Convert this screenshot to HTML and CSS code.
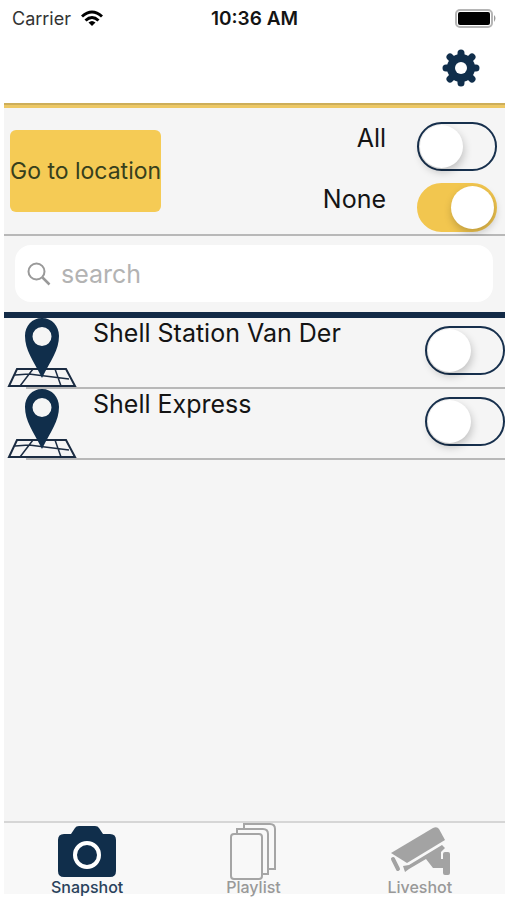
FILE: index.html
```html
<!DOCTYPE html>
<html lang="en">
<head>
<meta charset="utf-8">
<meta name="viewport" content="width=device-width, initial-scale=1">
<title>Snapshot</title>
<link rel="stylesheet" href="styles.css">
</head>
<body>
<svg class="sprite" aria-hidden="true">
  <symbol id="pin" viewBox="0 0 70 70">
    <g fill="none" stroke="#1b2c42">
      <path d="M10 51H59L68 68H2Z" stroke-width="2"/>
      <path d="M8 57L22 56L62 61M26 51L13 68M48 51L54 68" stroke-width="1.500"/>
    </g>
    <path fill="#102e4b" fill-rule="evenodd" d="M35 0C25 0 18 8 18 18C18 32 26 42 35 60C44 42 52 32 52 18C52 8 45 0 35 0ZM35 9A9.500 9.500 0 1 1 35 28A9.500 9.500 0 1 1 35 9Z"/>
  </symbol>
</svg>
<div class="app">
  <div class="status">
    <div class="carrier">Carrier
      <svg width="22" height="17" viewBox="0 0 22 17" fill="none" stroke="#000" stroke-width="3" aria-hidden="true">
        <path d="M1 6.500Q11-2.500 21 6.500M4.500 10.500Q11 4.500 17.500 10.500"/>
        <path d="M7.500 12.500Q11 9.500 14.500 12.500L11 16Z" fill="#000" stroke="none"/>
      </svg>
    </div>
    <time class="clock">10:36 AM</time>
    <svg class="battery" width="42" height="19" viewBox="0 0 42 19" aria-hidden="true">
      <rect x="1" y="1" width="36" height="17" rx="4" fill="#fff" stroke="#b5b5b5" stroke-width="2"/>
      <rect x="3" y="3" width="32" height="13" rx="2"/>
      <path d="M39 6Q42 9 39 13Z" fill="#999"/>
    </svg>
  </div>
  <header class="header">
    <button class="settings" aria-label="Settings">
      <svg width="38" height="38" viewBox="-19 -19 38 38" aria-hidden="true">
        <g stroke="#102e4b" stroke-width="7" stroke-linecap="round">
          <path d="M0-15V15M-15 0H15"/>
          <path d="M-11-11L11 11M11-11L-11 11"/>
        </g>
        <circle r="14" fill="#102e4b"/>
        <circle r="6" fill="#fff"/>
      </svg>
    </button>
  </header>
  <section class="filters">
    <button class="goto">Go to location</button>
    <div class="choices">
      <label class="choice"><span>All</span><input class="switch" type="checkbox"></label>
      <label class="choice"><span>None</span><input class="switch" type="checkbox" checked></label>
    </div>
  </section>
  <div class="search">
    <label class="field">
      <svg width="24" height="24" viewBox="0 0 24 24" fill="none" stroke="#999" stroke-width="2" aria-hidden="true">
        <circle cx="9.500" cy="9.500" r="8"/><path d="M15.500 15.500L22.500 22.500" stroke-width="2.500"/>
      </svg>
      <input class="query" type="search" placeholder="search" aria-label="search">
    </label>
  </div>
  <main class="list">
    <label class="row">
      <svg class="pin" aria-hidden="true"><use href="#pin"/></svg>
      <span class="name">Shell Station Van Der</span>
      <input class="switch" type="checkbox">
    </label>
    <label class="row">
      <svg class="pin" aria-hidden="true"><use href="#pin"/></svg>
      <span class="name">Shell Express</span>
      <input class="switch" type="checkbox">
    </label>
  </main>
  <nav class="tabs">
    <a class="tab active" href="#snapshot">
      <svg width="60" height="56" viewBox="0 0 60 56" aria-hidden="true">
        <path fill="#102e4b" d="M7 11H14L18 5Q19 3 22 3H38Q41 3 42 5L46 11H53Q59 11 59 17V48Q59 54 53 54H7Q1 54 1 48V17Q1 11 7 11Z"/>
        <circle cx="30" cy="32" r="12" fill="none" stroke="#fff" stroke-width="4"/>
      </svg>
      Snapshot
    </a>
    <a class="tab" href="#playlist">
      <svg width="46" height="57" viewBox="0 0 46 57" fill="#f8f8f8" stroke="#a5a5a5" stroke-width="2" aria-hidden="true">
        <path d="M14 6V1H40Q45 1 45 6V46H38"/>
        <path d="M7 11V6H33Q38 6 38 11V51H32"/>
        <rect x="1" y="11" width="31" height="45" rx="3"/>
      </svg>
      Playlist
    </a>
    <a class="tab" href="#liveshot">
      <svg width="60" height="54" viewBox="0 0 60 54" fill="#a3a3a3" aria-hidden="true">
        <path d="M1 30L43 5Q47 3 49 6L55 17L17 40Z"/>
        <path d="M13 43L19 42L52 22L55 25L51 29V36H53V31Q53 29 55 29H58Q60 29 60 31V50Q60 52 58 52H55Q53 52 53 50V45H43L36 36L19 46L15 49Z"/>
        <path d="M3 36L8 46" fill="none" stroke="#a3a3a3" stroke-width="4" stroke-linecap="round"/>
      </svg>
      Liveshot
    </a>
  </nav>
</div>
</body>
</html>
```

FILE: styles.css
```css
* { box-sizing: border-box; }

body {
  margin: 0;
  background: #fff;
  color: #141414;
  font-family: Inter, "Liberation Sans", sans-serif;
}

button, input { font: inherit; }

.sprite { position: absolute; width: 0; height: 0; }

.app {
  display: flex;
  flex-direction: column;
  min-height: 100vh;
  padding: 0 2px 6px 4px;
}

.status {
  display: grid;
  grid-template-columns: 1fr auto 1fr;
  align-items: center;
  height: 37px;
  padding: 0 8px;
  font-size: 18px;
}

.carrier { display: flex; align-items: center; gap: 10px; color: #333; }
.clock { font-size: 19px; font-weight: 600; }
.battery { justify-self: end; }

.header {
  display: flex;
  justify-content: flex-end;
  align-items: center;
  height: 68px;
  padding: 0 25px 4px 0;
  border-bottom: 2px solid #cdae5a;
}

.settings { display: flex; padding: 0; border: 0; background: none; }

.filters {
  display: flex;
  justify-content: space-between;
  align-items: center;
  height: 131px;
  padding: 0 8px 0 6px;
  border-top: 3px solid #edc865;
  border-bottom: 2px solid #b8b8b8;
  background: #f5f5f5;
}

.goto {
  width: 151px;
  height: 82px;
  padding: 0;
  border: 0;
  border-radius: 6px;
  background: #f5cb55;
  color: #37401c;
  font-size: 23px;
  white-space: nowrap;
}

.choices { display: grid; gap: 12px; padding-top: 12px; }

.choice {
  display: flex;
  justify-content: flex-end;
  gap: 31px;
  font-size: 25px;
  line-height: 32px;
}

.switch {
  flex: none;
  width: 80px;
  height: 49px;
  margin: 0;
  padding: 1px;
  border: 2px solid #17304d;
  border-radius: 25px;
  background: #f5f5f5;
  appearance: none;
}

.switch::before {
  content: "";
  display: block;
  width: 43px;
  height: 43px;
  border-radius: 50%;
  background: #fff;
  box-shadow: 1px 4px 8px rgba(0, 0, 0, 0.22);
}

.switch:checked { border-color: #f2c64f; background: #f2c64f; }
.switch:checked::before { margin-left: auto; }

.search {
  padding: 9px 12px 10px 11px;
  border-bottom: 6px solid #132b47;
  background: #f5f5f5;
}

.field {
  display: flex;
  align-items: center;
  gap: 10px;
  height: 57px;
  padding: 0 12px;
  border-radius: 16px;
  background: #fff;
}

.query {
  flex: 1;
  min-width: 0;
  padding: 0;
  border: 0;
  outline: 0;
  background: none;
  font-size: 25px;
  appearance: none;
}

.query::placeholder { color: #b3b3b3; opacity: 1; }

.list { flex: 1; background: #f5f5f5; }

.row {
  display: flex;
  align-items: flex-start;
  height: 71px;
  padding-left: 3px;
  background: linear-gradient(#b8b8b8, #b8b8b8) 22px 100% / 100% 2px no-repeat;
}

.pin { flex: none; width: 70px; height: 70px; }
.name { flex: 1; padding-left: 16px; font-size: 25px; line-height: 30px; }
.row .switch { margin-top: 8px; }

.tabs {
  display: grid;
  grid-template-columns: repeat(3, 1fr);
  height: 73px;
  border-top: 2px solid #d6d6d6;
  padding-right: 2px;
  background: #f8f8f8;
}

.tab {
  display: flex;
  flex-direction: column;
  align-items: center;
  justify-content: space-between;
  color: #999;
  font-size: 16px;
  font-weight: 500;
  line-height: 14px;
  text-decoration: none;
}

.tab svg { flex: none; }
.tab.active { color: #29425c; }
```
